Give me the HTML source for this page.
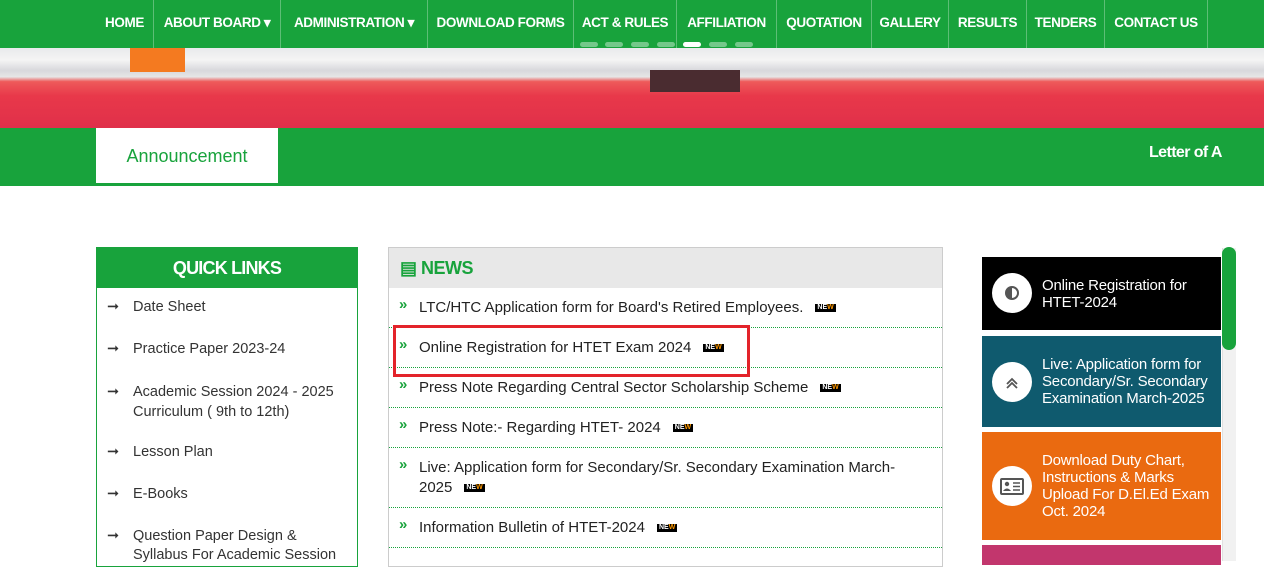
<!DOCTYPE html>
<html><head><meta charset="utf-8"><style>
*{margin:0;padding:0;box-sizing:border-box}
body{width:1264px;height:561px;overflow:hidden;background:#fff;font-family:"Liberation Sans",sans-serif;position:relative;color:#333}
.a{position:absolute}
#nav{left:0;top:0;width:1264px;height:48px;background:#18a33c}
.ni{position:absolute;top:0;height:48px;line-height:46px;color:#fff;font-weight:bold;font-size:13.5px;text-align:center;letter-spacing:-0.4px;border-left:1px solid rgba(255,255,255,.3)}
.car{position:absolute;top:42px;width:18px;height:5px;border-radius:3px;background:rgba(255,255,255,.4)}
#ban{left:0;top:48px;width:1264px;height:80px;background:linear-gradient(180deg,#e8eaec 0,#f4f4f4 15%,#d8d8dc 28%,#e6e6e6 36%,#ee5a5a 42%,#e8384a 60%,#e0304a 100%)}
#strip{left:0;top:128px;width:1264px;height:58px;background:#18a33c}
.ql{left:96px;top:247px;width:262px;height:320px;border:1px solid #18a33c;border-top:none}
.qh{left:96px;top:247px;width:262px;height:41px;background:#18a33c;color:#fff;font-weight:bold;font-size:18px;text-align:center;line-height:42px;letter-spacing:-0.8px}
.qi{position:absolute;left:107px;font-size:14.5px;color:#333;line-height:19px}
.qi b{position:absolute;left:0;font-weight:normal}
.qi span{position:absolute;left:26px;width:220px}
.nw{left:388px;top:247px;width:555px;height:320px;border:1px solid #ccc}
.nh{left:389px;top:248px;width:553px;height:40px;background:#e8e8e8}
.row{position:absolute;left:389px;width:553px;border-bottom:1px dotted #18a33c}
.row i{position:absolute;left:10px;top:0;color:#18a33c;font-style:normal;font-size:15px;font-weight:bold}
.row span{position:absolute;left:30px;font-size:15px;color:#222;line-height:20px;white-space:nowrap}
.nb{display:inline-block;font-size:7px;font-weight:bold;background:#000;color:#fff;padding:0 2px;margin-left:12px;vertical-align:middle;line-height:8px}
.nb em{color:#f90;font-style:normal}
.card{position:absolute;left:982px;width:239px;color:#fff;font-size:15px;line-height:17px;letter-spacing:-0.2px}
.card .c{position:absolute;left:10px;width:40px;height:40px;border-radius:50%;background:#fff}
.card span{position:absolute;left:60px;white-space:nowrap}
</style></head><body>
<div id="nav" class="a">
<div class="ni" style="left:96px;width:57px;border-left:none">HOME</div>
<div class="ni" style="left:153px;width:127px">ABOUT BOARD ▾</div>
<div class="ni" style="left:280px;width:147px">ADMINISTRATION ▾</div>
<div class="ni" style="left:427px;width:146px">DOWNLOAD FORMS</div>
<div class="ni" style="left:573px;width:103px">ACT &amp; RULES</div>
<div class="ni" style="left:676px;width:100px">AFFILIATION</div>
<div class="ni" style="left:776px;width:95px">QUOTATION</div>
<div class="ni" style="left:871px;width:77px">GALLERY</div>
<div class="ni" style="left:948px;width:78px">RESULTS</div>
<div class="ni" style="left:1026px;width:78px">TENDERS</div>
<div class="ni" style="left:1104px;width:103px">CONTACT US</div>
<div class="ni" style="left:1207px;width:1px;border-left:1px solid rgba(255,255,255,.3)"></div>
<div class="car" style="left:580px"></div><div class="car" style="left:605px"></div><div class="car" style="left:631px"></div><div class="car" style="left:657px"></div><div class="car" style="left:683px;background:#fff"></div><div class="car" style="left:709px"></div><div class="car" style="left:735px"></div>
</div>
<div id="ban" class="a"></div>
<div class="a" style="left:130px;top:48px;width:55px;height:24px;background:#f47a20"></div>
<div class="a" style="left:650px;top:70px;width:90px;height:22px;background:#4a2c30"></div>
<div id="strip" class="a"></div>
<div class="a" style="left:96px;top:128px;width:182px;height:55px;background:#fff;color:#18a33c;font-size:18px;text-align:center;line-height:56px">Announcement</div>
<div class="a" style="left:1149px;top:144px;color:#fff;font-size:16px;font-weight:bold;letter-spacing:-0.6px">Letter of A</div>

<div class="a ql"></div>
<div class="a qh">QUICK LINKS</div>
<div class="qi" style="top:298px"><b>➞</b><span>Date Sheet</span></div>
<div class="qi" style="top:340px"><b>➞</b><span>Practice Paper 2023-24</span></div>
<div class="qi" style="top:382px;line-height:20px"><b>➞</b><span>Academic Session 2024 - 2025 Curriculum ( 9th to 12th)</span></div>
<div class="qi" style="top:443px"><b>➞</b><span>Lesson Plan</span></div>
<div class="qi" style="top:485px"><b>➞</b><span>E-Books</span></div>
<div class="qi" style="top:527px"><b>➞</b><span>Question Paper Design &amp; Syllabus For Academic Session</span></div>

<div class="a nw"></div>
<div class="a nh"><span style="position:absolute;left:11px;top:10px;color:#18a33c;font-size:18px;font-weight:bold;letter-spacing:-0.5px">▤ NEWS</span></div>
<div class="row" style="top:288px;height:40px"><i style="top:8px">»</i><span style="top:10px">LTC/HTC Application form for Board's Retired Employees.<b class="nb">NE<em>W</em></b></span></div>
<div class="row" style="top:328px;height:40px"><i style="top:8px">»</i><span style="top:10px">Online Registration for HTET Exam 2024<b class="nb">NE<em>W</em></b></span></div>
<div class="row" style="top:368px;height:40px"><i style="top:8px">»</i><span style="top:10px">Press Note Regarding Central Sector Scholarship Scheme<b class="nb">NE<em>W</em></b></span></div>
<div class="row" style="top:408px;height:40px"><i style="top:8px">»</i><span style="top:10px">Press Note:- Regarding HTET- 2024<b class="nb">NE<em>W</em></b></span></div>
<div class="row" style="top:448px;height:60px"><i style="top:8px">»</i><span style="top:10px">Live: Application form for Secondary/Sr. Secondary Examination March-<br>2025<b class="nb">NE<em>W</em></b></span></div>
<div class="row" style="top:508px;height:40px"><i style="top:8px">»</i><span style="top:10px">Information Bulletin of HTET-2024<b class="nb">NE<em>W</em></b></span></div>
<div class="a" style="left:393px;top:325px;width:357px;height:52px;border:3px solid #e3232a"></div>

<div class="card" style="top:257px;height:73px;background:#000"><div class="c" style="top:16px"><div style="position:absolute;left:13px;top:13px;width:14px;height:14px;border-radius:50%;border:2px solid #555;background:linear-gradient(90deg,#555 50%,#fff 50%)"></div></div><span style="top:20px">Online Registration for<br>HTET-2024</span></div>
<div class="card" style="top:336px;height:91px;background:#0f5a6e"><div class="c" style="top:26px"><svg width="40" height="40" style="position:absolute;left:0;top:0"><path d="M15 22l5-5 5 5M15 26l5-5 5 5" stroke="#555" stroke-width="1.8" fill="none"/></svg></div><span style="top:20px">Live: Application form for<br>Secondary/Sr. Secondary<br>Examination March-2025</span></div>
<div class="card" style="top:432px;height:108px;background:#ea6a10"><div class="c" style="top:34px"><svg width="40" height="40" style="position:absolute;left:0;top:0"><rect x="9" y="13" width="22" height="15" rx="1" stroke="#555" stroke-width="2" fill="none"/><circle cx="15" cy="18" r="2.2" fill="#555"/><path d="M11 25q4-5 8 0z" fill="#555"/><path d="M21 17h7M21 20.5h7M21 24h7" stroke="#555" stroke-width="1.5"/></svg></div><span style="top:20px">Download Duty Chart,<br>Instructions &amp; Marks<br>Upload For D.El.Ed Exam<br>Oct. 2024</span></div>
<div class="card" style="top:545px;height:20px;background:#c2366d"></div>
<div class="a" style="left:1222px;top:248px;width:14px;height:313px;background:#f1f1f1;border-left:1px solid #e0e0e0"></div>
<div class="a" style="left:1222px;top:247px;width:14px;height:103px;background:#18a33c;border-radius:7px"></div>
</body></html>
